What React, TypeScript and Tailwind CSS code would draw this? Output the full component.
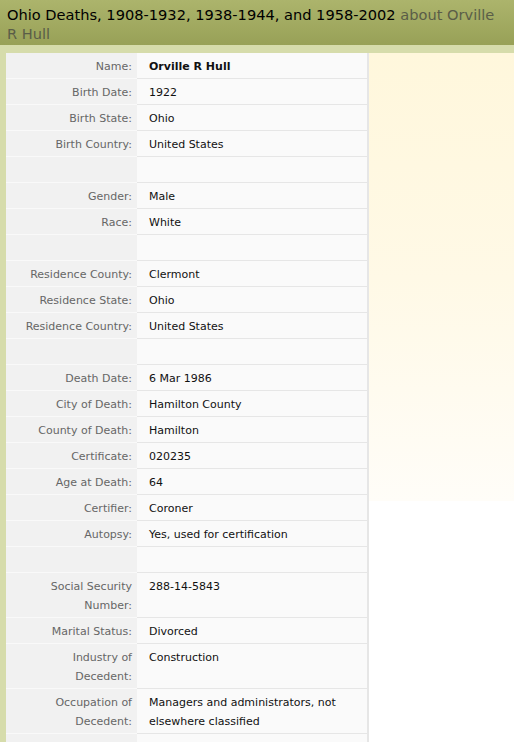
import React from "react";

type Row = { label?: React.ReactNode; value?: React.ReactNode; bold?: boolean };

const rows: Row[] = [
  { label: "Name:", value: "Orville R Hull", bold: true },
  { label: "Birth Date:", value: "1922" },
  { label: "Birth State:", value: "Ohio" },
  { label: "Birth Country:", value: "United States" },
  {},
  { label: "Gender:", value: "Male" },
  { label: "Race:", value: "White" },
  {},
  { label: "Residence County:", value: "Clermont" },
  { label: "Residence State:", value: "Ohio" },
  { label: "Residence Country:", value: "United States" },
  {},
  { label: "Death Date:", value: "6 Mar 1986" },
  { label: "City of Death:", value: "Hamilton County" },
  { label: "County of Death:", value: "Hamilton" },
  { label: "Certificate:", value: "020235" },
  { label: "Age at Death:", value: "64" },
  { label: "Certifier:", value: "Coroner" },
  { label: "Autopsy:", value: "Yes, used for certification" },
  {},
  { label: (<>Social Security<br />Number:</>), value: "288-14-5843" },
  { label: "Marital Status:", value: "Divorced" },
  { label: (<>Industry of<br />Decedent:</>), value: "Construction" },
  {
    label: (<>Occupation of<br />Decedent:</>),
    value: (<>Managers and administrators, not<br />elsewhere classified</>),
  },
  {},
];

export default function App() {
  return (
    <div className="w-[514px] h-[742px] bg-white overflow-hidden" style={{ fontFamily: '"DejaVu Sans", Verdana, sans-serif' }}>
      <div className="h-[45px] px-[7px] pt-[5px] bg-gradient-to-b from-[#acb46c] to-[#98a157] text-[14.6px] leading-[19px]">
        <span className="whitespace-nowrap text-black">Ohio Deaths, 1908-1932, 1938-1944, and 1958-2002 </span>
        <span className="whitespace-nowrap text-[#5a5d48]">about Orville</span>
        <br />
        <span className="text-[#5a5d48]">R Hull</span>
      </div>
      <div className="bg-[#d6dcab] pt-[8px] pl-[6px]">
        <div className="flex bg-white min-h-[690px]">
          <div className="w-[363px] border-r-2 border-[#e6e6e6] grid grid-cols-[131px_230px] content-start text-[11px] leading-[19px]">
            {rows.map((r, i) => (
              <React.Fragment key={i}>
                <div className="bg-[#f1f1f1] border-b border-[#f9f9f9] text-right text-[#666] pr-[5px] pl-[4px] pt-[4px] pb-[2px] min-h-[26px]">
                  {r.label}
                </div>
                <div
                  className={
                    "bg-[#fafafa] border-b border-[#e6e6e6] pl-[12px] pr-[4px] pt-[4px] pb-[2px] min-h-[26px] text-[#111] " +
                    (r.bold ? "font-bold" : "")
                  }
                >
                  {r.value}
                </div>
              </React.Fragment>
            ))}
          </div>
          <div className="flex-1">
            <div className="h-[448px] bg-gradient-to-b from-[#fff7dc] via-[#fff9e6] to-[#fffdf8]" />
          </div>
        </div>
      </div>
    </div>
  );
}
